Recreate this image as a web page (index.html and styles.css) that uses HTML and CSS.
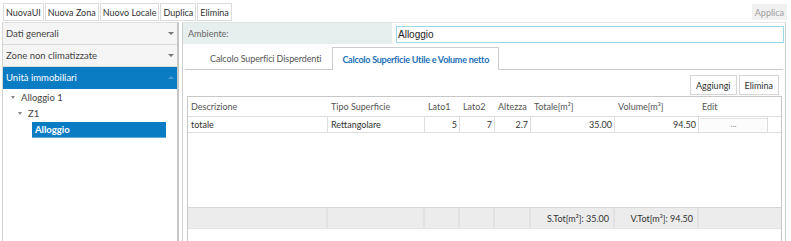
FILE: index.html
```html
<!DOCTYPE html>
<html>
<head>
  <title>Unità immobiliari</title>
  <link rel="stylesheet" href="styles.css">
</head>
<body>
  <div id="toolbar">
    <div class="tool-group">
      <button class="tool-btn">NuovaUI</button>
      <button class="tool-btn">Nuova Zona</button>
      <button class="tool-btn">Nuovo Locale</button>
      <button class="tool-btn">Duplica</button>
      <button class="tool-btn">Elimina</button>
    </div>
    <button class="tool-btn disabled">Applica</button>
  </div>

  <div id="main">
    <div id="sidebar">
      <div class="acc-head">Dati generali<span class="caret"></span></div>
      <div class="acc-head">Zone non climatizzate<span class="caret"></span></div>
      <div class="acc-head open">Unità immobiliari<span class="caret up"></span></div>
      <div class="tree">
        <div class="node level1"><span class="tri"></span>Alloggio 1</div>
        <div class="node level2"><span class="tri"></span>Z1</div>
        <div class="node level3 selected">Alloggio</div>
      </div>
    </div>

    <div id="content">
      <div class="field-row">
        <div class="field-label">Ambiente:</div>
        <input type="text" class="field-input" value="Alloggio">
      </div>

      <div class="tabs">
        <div class="tab">Calcolo Superfici Disperdenti</div>
        <div class="tab active">Calcolo Superficie Utile e Volume netto</div>
      </div>

      <div class="tab-panel">
        <div class="grid-actions">
          <button class="small-btn">Aggiungi</button>
          <button class="small-btn">Elimina</button>
        </div>

        <div class="grid">
          <div class="grid-row grid-head">
            <div class="cell">Descrizione</div>
            <div class="cell">Tipo Superficie</div>
            <div class="cell">Lato1</div>
            <div class="cell">Lato2</div>
            <div class="cell">Altezza</div>
            <div class="cell">Totale[m²]</div>
            <div class="cell">Volume[m³]</div>
            <div class="cell">Edit</div>
            <div class="cell"></div>
          </div>
          <div class="grid-row grid-data">
            <div class="cell">totale</div>
            <div class="cell">Rettangolare</div>
            <div class="cell num">5</div>
            <div class="cell num">7</div>
            <div class="cell num">2.7</div>
            <div class="cell num">35.00</div>
            <div class="cell num">94.50</div>
            <div class="cell edit"><span class="edit-btn">...</span></div>
            <div class="cell filler"></div>
          </div>
          <div class="grid-space"></div>
          <div class="grid-row grid-foot">
            <div class="cell"></div>
            <div class="cell"></div>
            <div class="cell"></div>
            <div class="cell"></div>
            <div class="cell"></div>
            <div class="cell num">S.Tot[m²]: 35.00</div>
            <div class="cell num">V.Tot[m³]: 94.50</div>
            <div class="cell last"></div>
            <div class="cell last"></div>
          </div>
        </div>
      </div>
    </div>
  </div>
</body>
</html>
```

FILE: styles.css
```css
html, body {
  margin: 0;
  height: 241px;
  overflow: hidden;
}
body {
  font-family: Lato, "Open Sans", sans-serif;
  font-size: 9px;
  color: #444;
  background-color: #fff;
}

/* top toolbar */
#toolbar {
  display: flex;
  justify-content: space-between;
  height: 22px;
  padding: 3px 4px 0 3px;
  box-sizing: border-box;
}
.tool-group {
  display: flex;
  gap: 1px;
}
.tool-btn {
  height: 18px;
  padding: 0 2px;
  font-family: inherit;
  font-size: 9px;
  color: #333;
  background-color: #fff;
  border: 1px solid #dcdcdc;
  border-radius: 0;
}
.tool-btn.disabled {
  color: #a0a0a0;
  background-color: #f1f1f1;
  border-color: #f1f1f1;
  margin-top: 1px;
  height: 16px;
}

#main {
  display: flex;
  height: 219px;
  padding-left: 2px;
}

/* left accordion */
#sidebar {
  width: 177px;
  box-sizing: border-box;
  border-left: 1px solid #d4d4d4;
  border-right: 2px solid #c6c6c6;
  border-top: 1px solid #dedede;
}
.acc-head {
  display: flex;
  align-items: center;
  justify-content: space-between;
  height: 21px;
  padding: 0 3px 0 3px;
  font-size: 9.5px;
  color: #444;
  background-color: #f5f5f5;
  border-bottom: 1px solid #dcdcdc;
}
.acc-head.open {
  color: #fff;
  background-color: #0a7cc4;
  border-bottom-color: #0a7cc4;
}
.caret {
  width: 0;
  height: 0;
  border-left: 3px solid transparent;
  border-right: 3px solid transparent;
  border-top: 3px solid #777;
}
.caret.up {
  border-top: none;
  border-bottom: 3px solid #4d9bd3;
}
.node {
  display: flex;
  align-items: center;
  height: 16px;
  color: #444;
  font-size: 9.5px;
}
.tri {
  width: 0;
  height: 0;
  margin-right: 6px;
  border-left: 2.5px solid transparent;
  border-right: 2.5px solid transparent;
  border-top: 3px solid #888;
}
.level1 { padding-left: 8px; }
.level2 { padding-left: 15px; }
.level3 {
  margin: 1px 0 0 29px;
  width: 134px;
  padding-left: 3px;
  box-sizing: border-box;
}
.node.selected {
  color: #fff;
  font-weight: bold;
  background-color: #0a7cc4;
  border-bottom: 1px solid #5fa9dc;
}

/* right panel */
#content {
  width: 604px;
  margin-left: 3px;
  box-sizing: border-box;
  border-left: 1px solid #cfcfcf;
  border-right: 1px solid #cfcfcf;
  border-top: 1px solid #e4e4e4;
  padding-right: 1px;
}
.field-row {
  display: flex;
  align-items: center;
  gap: 4px;
  height: 21px;
}
.field-label {
  width: 209px;
  height: 21px;
  line-height: 21px;
  padding-left: 5px;
  box-sizing: border-box;
  color: #666;
  background-color: #e7eeee;
}
.field-input {
  flex: 1;
  height: 17px;
  margin: 2px 0 0 0;
  padding: 0 0 0 1px;
  box-sizing: border-box;
  border: 1px solid #9fd8ee;
  font-family: "Liberation Sans", Arial, sans-serif;
  font-size: 10px;
  color: #222;
  outline: none;
}
.tabs {
  display: flex;
  height: 26px;
  padding: 3px 0 0 14px;
  margin: 0 1px 0 2px;
  box-sizing: border-box;
  border-bottom: 1px solid #cccccc;
}
.tab {
  display: flex;
  align-items: center;
  padding: 0 11px 0 11px;
  color: #555;
  letter-spacing: -0.1px;
}
.tab.active {
  padding: 0 9px;
  color: #1b70b8;
  font-weight: bold;
  letter-spacing: -0.25px;
  background-color: #fff;
  border: 1px solid #cccccc;
  border-bottom: none;
  margin-bottom: -1px;
}

.tab-panel {
  padding: 5px 2px 0 4px;
}
.grid-actions {
  display: flex;
  justify-content: flex-end;
  gap: 2px;
  padding-right: 3px;
  margin-bottom: 1px;
}
.small-btn {
  height: 20px;
  padding: 0 5px;
  font-family: inherit;
  font-size: 9px;
  color: #333;
  background-color: #fff;
  border: 1px solid #d6d6d6;
}

/* data grid */
.grid {
  height: 150px;
  border: 1px solid #c8c8c8;
  border-bottom: none;
}
.grid-row {
  display: grid;
  grid-template-columns: 140px 97px 35px 35px 36px 84px 84px 69px 1fr;
}
.cell {
  padding: 0 3px;
  overflow: hidden;
  white-space: nowrap;
}
.grid-head {
  height: 19px;
  line-height: 19px;
  color: #555;
}
.grid-data {
  height: 17px;
  line-height: 16px;
  border-top: 1px solid #dddddd;
  border-bottom: 1px solid #dddddd;
  box-sizing: border-box;
}
.grid-data .cell {
  border-right: 1px solid #dddddd;
  color: #333;
}
.grid-data .cell.filler {
  border-right: none;
}
.cell.num {
  text-align: right;
  padding-right: 2px;
}
.cell.edit {
  padding: 1px 0 0 1px;
}
.edit-btn {
  display: block;
  height: 13px;
  line-height: 9px;
  text-align: center;
  color: #999;
  border-top: 1px solid #e2e2e2;
  background-color: #fcfcfc;
}
.grid-space {
  height: 74px;
}
.grid-foot {
  height: 22px;
  line-height: 22px;
  background-color: #ececec;
  border-top: 1px solid #d6d6d6;
  border-bottom: 1px solid #e2e2e2;
  box-sizing: border-box;
  color: #333;
}
.grid-foot .cell {
  border-right: 2px solid #e2e2e2;
}
.grid-foot .cell.num {
  padding-right: 4px;
}
.grid-foot .cell.last {
  border-right: none;
}
```
